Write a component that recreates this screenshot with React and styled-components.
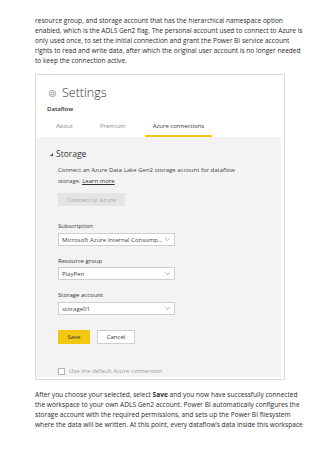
import React from "react"
import styled, { createGlobalStyle } from "styled-components"

const colors = {
  text: "#333333",
  muted: "#777777",
  border: "#dcdcdc",
  panel: "#f3f3f3",
  yellow: "#f2c811",
}

const GlobalStyle = createGlobalStyle`
  html, body {
    margin: 0;
    padding: 0;
    background: #ffffff;
  }
  body {
    font-family: "Open Sans", "Noto Sans", "Liberation Sans", sans-serif;
    color: ${colors.text};
  }
`

const Page = styled.div`
  width: 320px;
  height: 453px;
  overflow: hidden;
  padding: 16px 35px 0;
  box-sizing: border-box;
`

const Paragraph = styled.p`
  margin: 0;
  font-size: 6.6px;
  line-height: 10px;
  white-space: nowrap;
  color: #2b2b2b;
`

const Shot = styled.div`
  margin: 8px 0 10px;
  width: 250px;
  height: 306px;
  box-sizing: border-box;
  border: 1px solid ${colors.border};
  display: flex;
  flex-direction: column;
  padding: 0 3px 2px 0;
`

const Header = styled.div`
  display: flex;
  align-items: center;
  gap: 5px;
  margin: 10px 0 0 12px;
  height: 16px;
`

const Title = styled.span`
  font-size: 12.5px;
  font-weight: 300;
  color: #333;
  line-height: 16px;
`

const Subtitle = styled.div`
  margin: 4px 0 0 11px;
  font-size: 6px;
  font-weight: 600;
  line-height: 8px;
  color: #333;
`

const Tabs = styled.div`
  display: flex;
  gap: 11px;
  margin: 5px 0 0 12px;
`

const Tab = styled.div`
  padding: 4px 8px 5px;
  font-size: 6px;
  line-height: 8px;
  color: ${(p) => (p.$active ? "#333" : "#888")};
  border-bottom: 2px solid ${(p) => (p.$active ? colors.yellow : "transparent")};
`

const Panel = styled.div`
  flex: 1;
  background: ${colors.panel};
  padding: 11px 0 0 22px;
`

const SectionTitle = styled.div`
  display: flex;
  align-items: center;
  gap: 3px;
  margin-left: -8px;
  font-size: 8.5px;
  line-height: 12px;
  color: #333;
`

const Caret = styled.span`
  width: 0;
  height: 0;
  border-left: 3px solid transparent;
  border-bottom: 3px solid #444;
`

const Description = styled.div`
  margin-top: 5px;
  font-size: 6px;
  line-height: 11px;
  white-space: nowrap;
  color: #444;
`

const LearnMore = styled.span`
  text-decoration: underline;
  color: #333;
`

const GhostButton = styled.div`
  margin-top: 6px;
  width: 67px;
  height: 13px;
  background: #e4e4e4;
  color: #a8a8a8;
  font-size: 6px;
  display: flex;
  align-items: center;
  justify-content: center;
`

const Field = styled.div`
  margin-top: ${(p) => p.$gap}px;
  display: flex;
  flex-direction: column;
  gap: ${(p) => p.$inner}px;
`

const Label = styled.div`
  font-size: 6px;
  line-height: 8px;
  color: #333;
`

const Select = styled.div`
  width: 117px;
  height: 13px;
  box-sizing: border-box;
  background: #fff;
  border: 1px solid #cfcfcf;
  display: flex;
  align-items: center;
  justify-content: space-between;
  padding: 0 4px 0 3px;
  font-size: 6px;
  color: #444;
`

const Chevron = () => (
  <svg width="5" height="3" viewBox="0 0 5 3">
    <path d="M0.5 0.5 L2.5 2.5 L4.5 0.5" fill="none" stroke="#888" strokeWidth="0.7" />
  </svg>
)

const Actions = styled.div`
  margin-top: 15px;
  display: flex;
  gap: 7px;
`

const Button = styled.div`
  width: ${(p) => p.$w}px;
  height: 14px;
  box-sizing: border-box;
  display: flex;
  align-items: center;
  justify-content: center;
  font-size: 6px;
  color: #333;
  background: ${(p) => (p.$primary ? colors.yellow : "#fff")};
  border: 1px solid ${(p) => (p.$primary ? colors.yellow : "#cfcfcf")};
`

const CheckRow = styled.div`
  margin-top: 23px;
  display: flex;
  align-items: center;
  gap: 4px;
  font-size: 6px;
  line-height: 8px;
  color: #9a9a9a;
`

const Box = styled.span`
  width: 7px;
  height: 7px;
  box-sizing: border-box;
  border: 1px solid #b5b5b5;
  background: #fff;
`

const Gear = () => (
  <svg width="9" height="9" viewBox="0 0 24 24" fill="none" stroke="#777" strokeWidth="1.6">
    <circle cx="12" cy="12" r="3.5" />
    <path d="M12 2.5l1.6 2.4 2.8-.8.6 2.8 2.8.6-.8 2.8 2.4 1.6-2.4 1.6.8 2.8-2.8.6-.6 2.8-2.8-.8L12 21.5l-1.6-2.4-2.8.8-.6-2.8-2.8-.6.8-2.8L2.5 12l2.4-1.6-.8-2.8 2.8-.6.6-2.8 2.8.8z" />
  </svg>
)

export default function App() {
  return (
    <Page>
      <GlobalStyle />
      <Paragraph>
        resource group, and storage account that has the hierarchical namespace option
        <br />
        enabled, which is the ADLS Gen2 flag. The personal account used to connect to Azure is
        <br />
        only used once, to set the initial connection and grant the Power BI service account
        <br />
        rights to read and write data, after which the original user account is no longer needed
        <br />
        to keep the connection active.
      </Paragraph>
      <Shot>
        <Header>
          <Gear />
          <Title>Settings</Title>
        </Header>
        <Subtitle>Dataflow</Subtitle>
        <Tabs>
          <Tab>About</Tab>
          <Tab>Premium</Tab>
          <Tab $active>Azure connections</Tab>
        </Tabs>
        <Panel>
          <SectionTitle>
            <Caret />
            Storage
          </SectionTitle>
          <Description>
            Connect an Azure Data Lake Gen2 storage account for dataflow
            <br />
            storage. <LearnMore>Learn more</LearnMore>
          </Description>
          <GhostButton>Connect to Azure</GhostButton>
          <Field $gap={16} $inner={3}>
            <Label>Subscription</Label>
            <Select>
              Microsoft Azure Internal Consump... <Chevron />
            </Select>
          </Field>
          <Field $gap={11} $inner={2}>
            <Label>Resource group</Label>
            <Select>
              PlayPen <Chevron />
            </Select>
          </Field>
          <Field $gap={11} $inner={3}>
            <Label>Storage account</Label>
            <Select>
              storage01 <Chevron />
            </Select>
          </Field>
          <Actions>
            <Button $primary $w={32}>Save</Button>
            <Button $w={38}>Cancel</Button>
          </Actions>
          <CheckRow>
            <Box />
            Use the default Azure connection
          </CheckRow>
        </Panel>
      </Shot>
      <Paragraph>
        After you choose your selected, select <b>Save</b> and you now have successfully connected
        <br />
        the workspace to your own ADLS Gen2 account. Power BI automatically configures the
        <br />
        storage account with the required permissions, and sets up the Power BI filesystem
        <br />
        where the data will be written. At this point, every dataflow’s data inside this workspace
      </Paragraph>
    </Page>
  )
}
